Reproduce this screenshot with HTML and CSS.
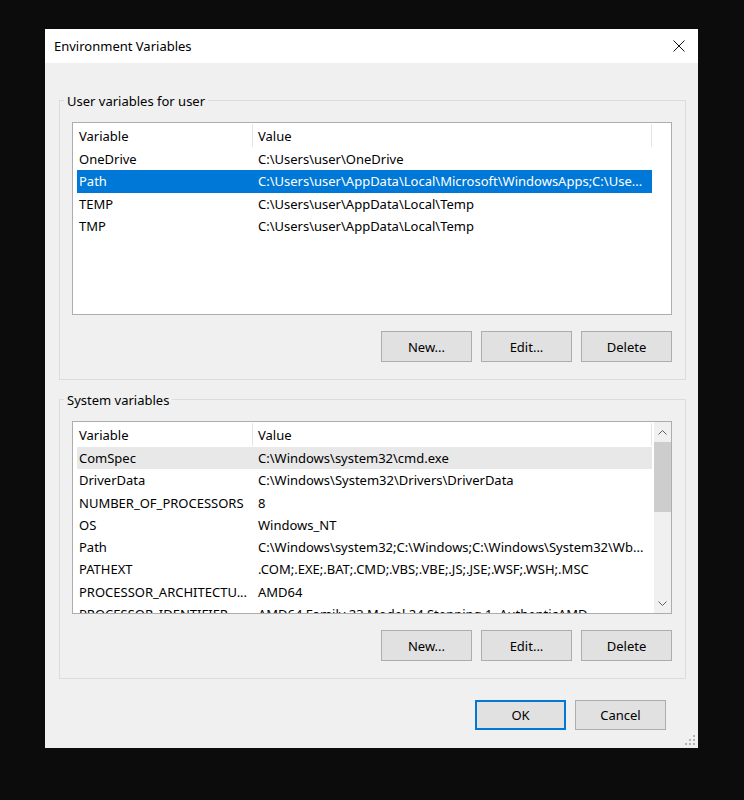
FILE: index.html
```html
<!DOCTYPE html>
<html lang="en">
<head>
    <meta charset="UTF-8">
    <meta name="viewport" content="width=device-width, initial-scale=1.0">
    <title>Environment Variables</title>
    <link rel="stylesheet" href="styles.css">
</head>
<body>
    <div class="dialog">
        <div class="titlebar">
            <span class="title">Environment Variables</span>
            <span class="close">
                <svg width="12" height="12" viewBox="0 0 12 12"><path d="M0.5 0.5L11.5 11.5M11.5 0.5L0.5 11.5" stroke="#111" stroke-width="1" fill="none"/></svg>
            </span>
        </div>

        <div class="content">
            <!-- user variables -->
            <div class="group">
                <div class="group-title">User variables for user</div>
                <div class="list">
                    <div class="list-main">
                        <div class="list-head">
                            <div class="head-var">Variable</div>
                            <div class="head-val">Value</div>
                        </div>
                        <div class="row"><div class="cell-var">OneDrive</div><div class="cell-val">C:\Users\user\OneDrive</div></div>
                        <div class="row selected"><div class="cell-var">Path</div><div class="cell-val">C:\Users\user\AppData\Local\Microsoft\WindowsApps;C:\Use...</div></div>
                        <div class="row"><div class="cell-var">TEMP</div><div class="cell-val">C:\Users\user\AppData\Local\Temp</div></div>
                        <div class="row"><div class="cell-var">TMP</div><div class="cell-val">C:\Users\user\AppData\Local\Temp</div></div>
                    </div>
                </div>
                <div class="buttons">
                    <button class="btn">New...</button>
                    <button class="btn">Edit...</button>
                    <button class="btn">Delete</button>
                </div>
            </div>

            <!-- system variables -->
            <div class="group">
                <div class="group-title">System variables</div>
                <div class="list">
                    <div class="list-main">
                        <div class="list-head">
                            <div class="head-var">Variable</div>
                            <div class="head-val">Value</div>
                        </div>
                        <div class="row hover"><div class="cell-var">ComSpec</div><div class="cell-val">C:\Windows\system32\cmd.exe</div></div>
                        <div class="row"><div class="cell-var">DriverData</div><div class="cell-val">C:\Windows\System32\Drivers\DriverData</div></div>
                        <div class="row"><div class="cell-var">NUMBER_OF_PROCESSORS</div><div class="cell-val">8</div></div>
                        <div class="row"><div class="cell-var">OS</div><div class="cell-val">Windows_NT</div></div>
                        <div class="row"><div class="cell-var">Path</div><div class="cell-val">C:\Windows\system32;C:\Windows;C:\Windows\System32\Wb...</div></div>
                        <div class="row"><div class="cell-var">PATHEXT</div><div class="cell-val">.COM;.EXE;.BAT;.CMD;.VBS;.VBE;.JS;.JSE;.WSF;.WSH;.MSC</div></div>
                        <div class="row"><div class="cell-var">PROCESSOR_ARCHITECTU...</div><div class="cell-val">AMD64</div></div>
                        <div class="row"><div class="cell-var">PROCESSOR_IDENTIFIER</div><div class="cell-val">AMD64 Family 23 Model 24 Stepping 1, AuthenticAMD</div></div>
                    </div>
                    <div class="scrollbar">
                        <div class="sb-btn">
                            <svg width="9" height="5" viewBox="0 0 9 5"><polyline points="0.5,4.5 4.5,0.5 8.5,4.5" stroke="#606060" fill="none"/></svg>
                        </div>
                        <div class="sb-thumb"></div>
                        <div class="sb-track"></div>
                        <div class="sb-btn">
                            <svg width="9" height="5" viewBox="0 0 9 5"><polyline points="0.5,0.5 4.5,4.5 8.5,0.5" stroke="#606060" fill="none"/></svg>
                        </div>
                    </div>
                </div>
                <div class="buttons">
                    <button class="btn">New...</button>
                    <button class="btn">Edit...</button>
                    <button class="btn">Delete</button>
                </div>
            </div>

            <div class="footer">
                <button class="btn btn-default">OK</button>
                <button class="btn">Cancel</button>
            </div>
        </div>

        <svg class="grip" width="11" height="11" viewBox="0 0 11 11">
            <rect x="8" y="0" width="2" height="2" fill="#b4b4b4"/>
            <rect x="4" y="4" width="2" height="2" fill="#b4b4b4"/>
            <rect x="8" y="4" width="2" height="2" fill="#b4b4b4"/>
            <rect x="0" y="8" width="2" height="2" fill="#b4b4b4"/>
            <rect x="4" y="8" width="2" height="2" fill="#b4b4b4"/>
            <rect x="8" y="8" width="2" height="2" fill="#b4b4b4"/>
        </svg>
    </div>
</body>
</html>
```

FILE: styles.css
```css
*{
    box-sizing: border-box;
}
body{
    margin: 0;
    background-color: #0c0c0c;
    font-family: "Noto Sans", "Open Sans", sans-serif;
    font-size: 13px;
    color: #000;
}
.dialog{
    position: relative;
    width: 653px;
    height: 719px;
    margin: 29px 0 0 45px;
    background-color: #f0f0f0;
}
.titlebar{
    height: 34px;
    background-color: #fff;
    display: flex;
    align-items: center;
    justify-content: space-between;
    padding: 0 13px 0 9px;
}
.close{
    display: flex;
}
.content{
    padding: 0 12px 0 14px;
}
.group{
    border: 1px solid #dcdcdc;
    margin-top: 37px;
    padding: 0 13px 17px 12px;
}
.group + .group{
    margin-top: 19px;
}
.group-title{
    width: max-content;
    margin: -9px 0 0 -8px;
    padding: 0 3px;
    line-height: 18px;
    height: 16px;
    background-color: #f0f0f0;
}
.list{
    display: flex;
    height: 193px;
    margin-top: 14px;
    border: 1px solid #adadad;
    background-color: #fff;
    overflow: hidden;
}
.list-main{
    flex: 1;
    min-width: 0;
}
.list-head{
    display: flex;
    height: 25px;
    align-items: center;
}
.head-var, .head-val{
    height: 23px;
    line-height: 24px;
    border-right: 1px solid #e5e5e5;
}
.head-var{
    width: 180px;
    padding-left: 6px;
}
.head-val{
    width: 399px;
    padding-left: 5px;
}
.row{
    display: flex;
    width: 575px;
    height: 22.25px;
    line-height: 23px;
    margin-left: 4px;
}
.cell-var, .cell-val{
    white-space: nowrap;
    overflow: hidden;
    text-overflow: ellipsis;
}
.cell-var{
    width: 175px;
    padding-left: 2px;
}
.cell-val{
    width: 400px;
    padding: 0 2px 0 6px;
}
.selected{
    background-color: #0078d7;
    color: #fff;
}
.hover{
    background-color: #e8e8e8;
}
.scrollbar{
    width: 17px;
    display: flex;
    flex-direction: column;
    background-color: #f0f0f0;
}
.sb-btn{
    height: 20px;
    display: flex;
    align-items: center;
    justify-content: center;
}
.sb-thumb{
    height: 70px;
    background-color: #cdcdcd;
}
.sb-track{
    flex: 1;
}
.buttons, .footer{
    display: flex;
    justify-content: flex-end;
    gap: 9px;
}
.buttons{
    margin-top: 16px;
}
.footer{
    margin-top: 21px;
    padding-right: 20px;
}
.btn{
    width: 91px;
    height: 31px;
    padding: 0;
    background-color: #e1e1e1;
    border: 1px solid #adadad;
    font: inherit;
    color: #000;
}
.footer .btn{
    height: 30px;
}
.btn-default{
    border: 2px solid #0078d7;
}
.grip{
    position: absolute;
    right: 2px;
    bottom: 2px;
}
```
